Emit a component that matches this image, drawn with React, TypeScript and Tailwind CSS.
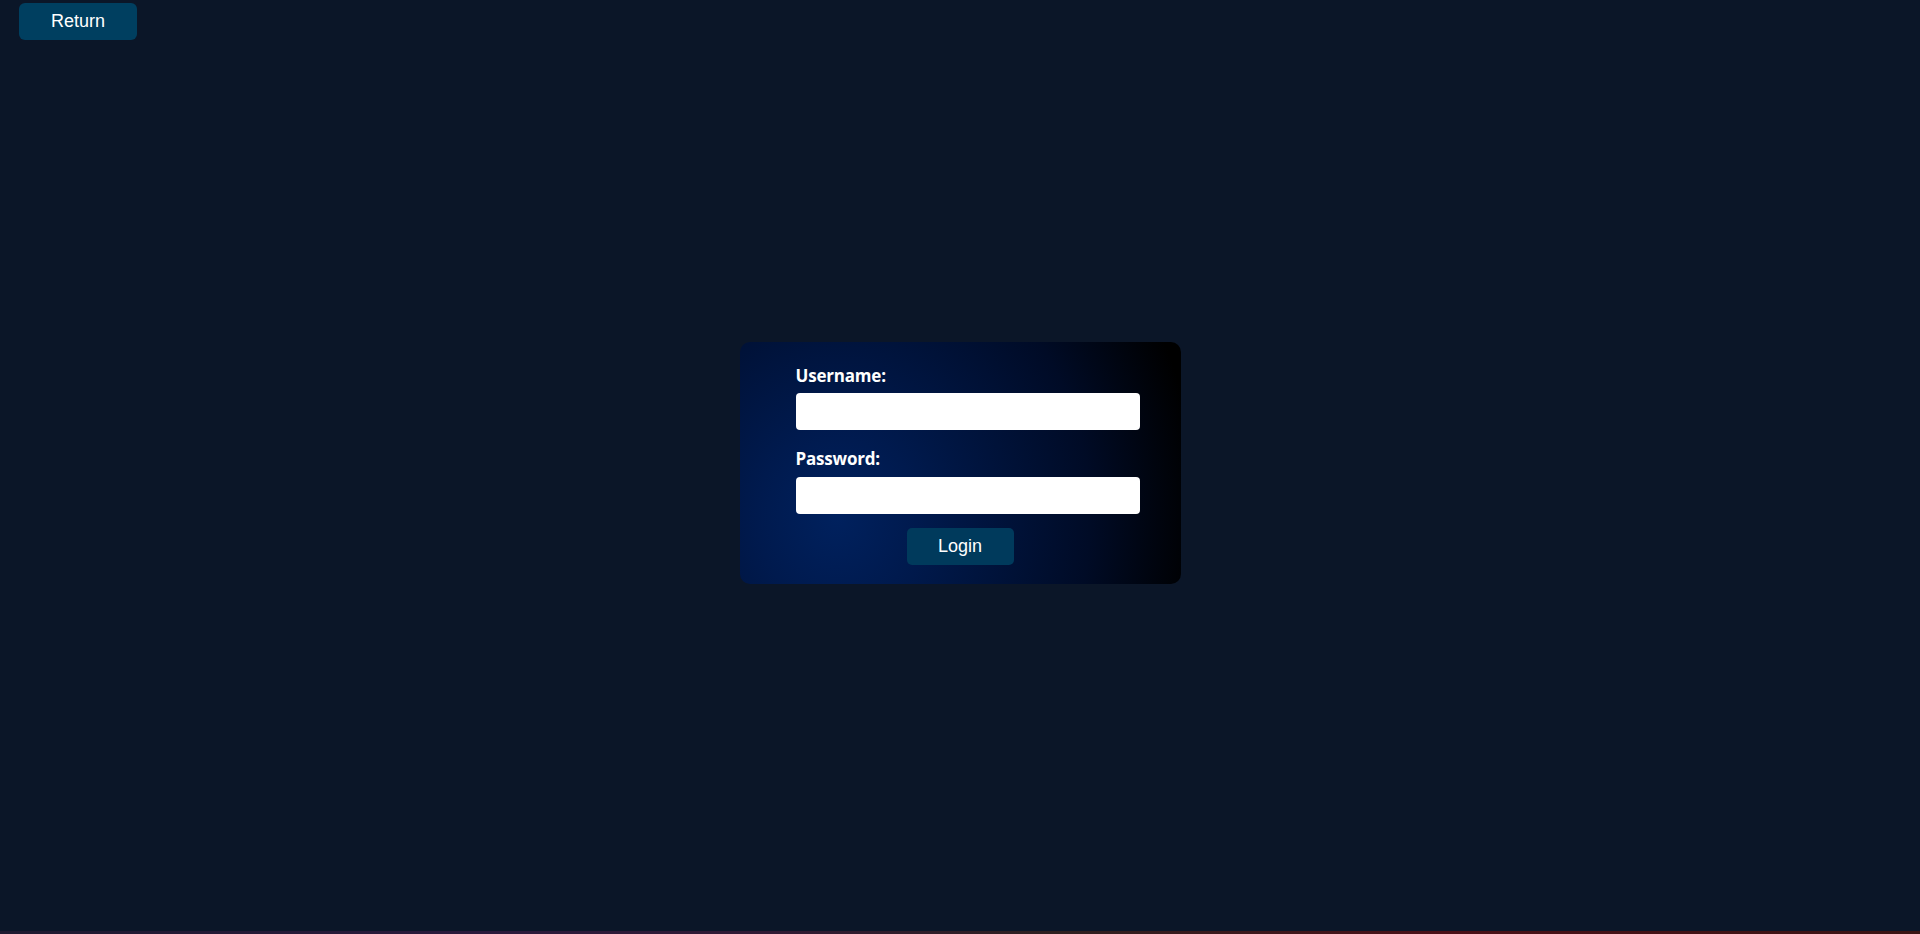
import React, { useState } from "react";

const App: React.FC = () => {
	const [username, setUsername] = useState<string>("");
	const [password, setPassword] = useState<string>("");

	return (
		<div className="relative h-[934px] w-full overflow-hidden bg-[#0b1628]">
			{/* Top bar */}
			<div className="pl-[19px] pt-[3px]">
				<button className="h-[37px] w-[118px] rounded-[6px] bg-[#003f60] text-[18px] text-white font-['Liberation_Sans',Arial,sans-serif]">
					Return
				</button>
			</div>

			{/* Login card */}
			<div className="mx-auto mt-[302px] w-[441px] rounded-[10px] bg-[radial-gradient(ellipse_82%_170%_at_22%_72%,#00215e_0%,#001a4e_22%,#000b26_70%,#000000_100%)] pt-[22px] pb-[19px]">
				<div className="pl-[56px] pr-[41px] font-['Open_Sans','Noto_Sans',sans-serif]">
					<label className="block text-[17px] leading-[24px] font-bold tracking-[-0.2px] text-white">
						Username:
					</label>
					<input
						type="text"
						value={username}
						onChange={(e) => setUsername(e.target.value)}
						className="mt-[5px] block h-[37px] w-[344px] rounded-[4px] bg-white px-2 text-black outline-none"
					/>
					<label className="mt-[17px] block text-[17px] leading-[24px] font-bold tracking-[-0.2px] text-white">
						Password:
					</label>
					<input
						type="password"
						value={password}
						onChange={(e) => setPassword(e.target.value)}
						className="mt-[6px] block h-[37px] w-[344px] rounded-[4px] bg-white px-2 text-black outline-none"
					/>
				</div>
				<div className="mt-[14px] flex justify-center">
					<button className="h-[37px] w-[107px] rounded-[5px] bg-[#003a5c] text-[18px] text-white font-['Liberation_Sans',Arial,sans-serif]">
						Login
					</button>
				</div>
			</div>

			{/* Bottom accent strip */}
			<div className="absolute bottom-0 left-0 h-[3px] w-full bg-[linear-gradient(90deg,#1e1a30_0%,#2a1a3c_25%,#301a34_40%,#2e2020_55%,#4a1018_75%,#3a1414_100%)]" />
		</div>
	);
};

export default App;
